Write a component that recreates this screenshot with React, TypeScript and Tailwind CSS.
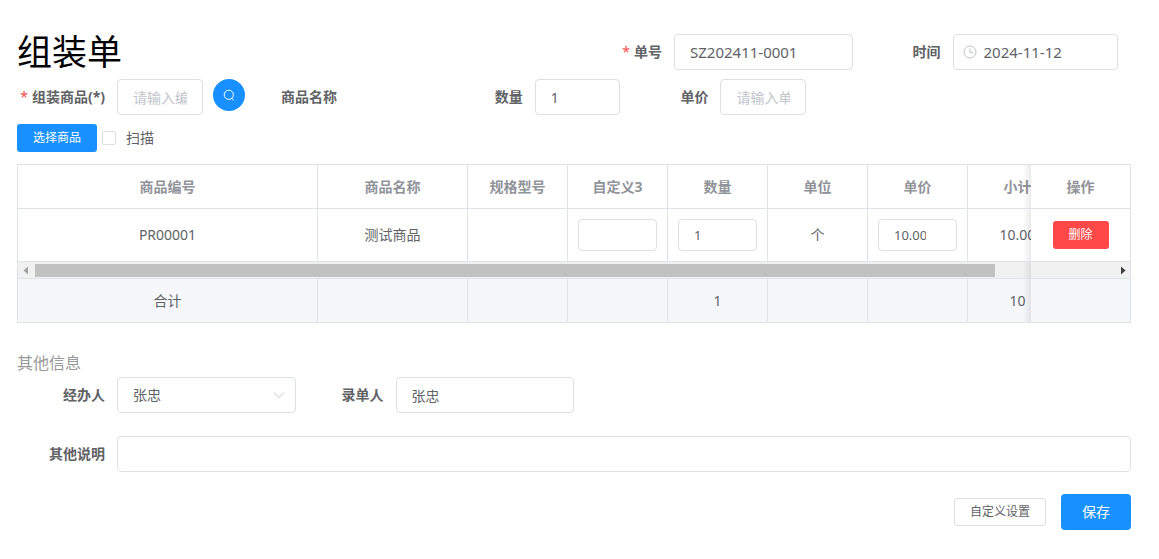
import type { InputHTMLAttributes, ReactNode } from "react";
import clsx from "clsx";

const COLUMNS = [
  { title: "商品编号", width: "w-[300px]", total: "合计" },
  { title: "商品名称", width: "w-[150px]", total: "" },
  { title: "规格型号", width: "w-[100px]", total: "" },
  { title: "自定义3", width: "w-[100px]", total: "" },
  { title: "数量", width: "w-[100px]", total: "1" },
  { title: "单位", width: "w-[100px]", total: "" },
  { title: "单价", width: "w-[100px]", total: "" },
  { title: "小计", width: "w-[100px]", total: "10" },
  { title: "", width: "w-[100px]", total: "" },
];

const table = "w-full min-w-[1250px] table-fixed border-separate border-spacing-0";
const cell = "border-r border-b border-[#dfe2e8] px-2.5 text-center";

// Soft shade that the pinned column casts over what passes below it
const shade =
  "before:absolute before:inset-y-0 before:right-full before:w-2 before:bg-linear-to-l before:from-black/8 before:to-transparent";
const pinned = clsx("sticky right-0", shade);

const inputBase =
  "block w-full min-w-0 rounded border border-[#dcdfe6] bg-white text-[#606266] outline-none placeholder:text-[#c0c4cc] focus:border-[#1890ff]";

function TextInput({ className, ...props }: InputHTMLAttributes<HTMLInputElement>) {
  return <input className={clsx(inputBase, "h-9 px-[15px]", className)} {...props} />;
}

function CellInput(props: InputHTMLAttributes<HTMLInputElement>) {
  return <input className={clsx(inputBase, "h-8 px-[15px] text-[13px]")} {...props} />;
}

function Field({ id, label, required, className, children }: {
  id?: string;
  label: string;
  required?: boolean;
  className?: string;
  children?: ReactNode;
}) {
  return (
    <div className={clsx("flex min-w-0", className)}>
      <label htmlFor={id} className="w-[100px] shrink-0 pr-3 text-right leading-9 font-bold whitespace-nowrap">
        {required && <span className="mr-1 font-normal text-[#ff4949]">*</span>}
        {label}
      </label>
      <div className="relative min-w-0 flex-1">{children}</div>
    </div>
  );
}

function ColGroup() {
  return (
    <colgroup>
      {COLUMNS.map((c) => (
        <col key={c.title} className={c.width} />
      ))}
      <col className="w-[100px]" />
    </colgroup>
  );
}

function ItemsTable() {
  return (
    <div className="mt-3 border-t border-l border-[#dfe2e8]">
      <div className="overflow-hidden">
        <table className={table}>
          <ColGroup />
          <thead className="text-[#909399]">
            <tr className="h-11">
              {COLUMNS.map((c) => (
                <th key={c.title} className={cell}>{c.title}</th>
              ))}
              <th className={clsx(cell, pinned, "bg-white")}>操作</th>
            </tr>
          </thead>
          <tbody>
            <tr className="h-[53px]">
              <td className={cell}>PR00001</td>
              <td className={cell}>测试商品</td>
              <td className={cell} />
              <td className={cell}><CellInput type="text" aria-label="自定义3" /></td>
              <td className={cell}><CellInput type="number" aria-label="数量" defaultValue="1" /></td>
              <td className={cell}>个</td>
              <td className={cell}><CellInput type="number" step="0.01" aria-label="单价" defaultValue="10.00" /></td>
              <td className={cell}>10.00</td>
              <td className={cell} />
              <td className={clsx(cell, pinned, "bg-white")}>
                <button type="button" className="h-7 w-14 rounded-[3px] bg-[#ff4949] text-xs text-white">删除</button>
              </td>
            </tr>
          </tbody>
        </table>
      </div>

      {/* Horizontal scroll bar */}
      <div className="relative flex h-4 items-center bg-[#f1f1f1]">
        <svg className="h-4 w-[17px]" viewBox="0 0 17 16"><path d="M10 4.5v8L5.5 8.5z" fill="#a3a3a3" /></svg>
        <div className="flex-1">
          <div className="h-[13px] w-[89%] bg-[#c1c1c1]" />
        </div>
        <svg className="h-4 w-[17px]" viewBox="0 0 17 16"><path d="M7 4.5v8l4.5-4z" fill="#404040" /></svg>
        <div className={clsx("absolute inset-y-0 right-0 w-[100px] border-r border-[#dfe2e8]", shade)} />
      </div>

      <div className="overflow-hidden">
        <table className={table}>
          <ColGroup />
          <tbody>
            <tr className="h-[45px]">
              {COLUMNS.map((c) => (
                <td key={c.title} className={clsx(cell, "border-t bg-[#f5f7fa]")}>{c.total}</td>
              ))}
              <td className={clsx(cell, pinned, "border-t bg-[#f5f7fa]")} />
            </tr>
          </tbody>
        </table>
      </div>
    </div>
  );
}

export default function App() {
  return (
    <form className="bg-white pt-[34px] pr-7 pb-7 pl-[17px] font-['Noto_Sans','Noto_Sans_CJK_SC',sans-serif] text-sm text-[#606266]">
      <div className="grid grid-cols-24">
        <h1 className="col-span-12 text-[35px] leading-9 text-black">组装单</h1>
        <Field id="orderNo" label="单号" required className="col-span-6">
          <TextInput id="orderNo" type="text" defaultValue="SZ202411-0001" className="text-[15px]" />
        </Field>
        <Field id="orderDate" label="时间" className="col-span-6 pr-[13px]">
          <TextInput id="orderDate" type="text" defaultValue="2024-11-12" className="pl-[30px] text-[15px]" />
          <svg className="absolute top-[11px] left-2.5 size-3.5" viewBox="0 0 14 14" fill="none" stroke="#c0c4cc">
            <circle cx="7" cy="7" r="6" />
            <path d="M7 3.5V7.5H10" />
          </svg>
        </Field>
      </div>

      <div className="mt-[9px] grid grid-cols-24">
        <Field id="product" label="组装商品(*)" required className="col-span-4">
          <TextInput id="product" type="text" placeholder="请输入编号" />
        </Field>
        <div className="pl-2.5">
          <button type="button" aria-label="搜索" className="flex size-8 items-center justify-center rounded-full bg-[#1890ff]">
            <svg className="size-3.5" viewBox="0 0 14 14" fill="none" stroke="#fff">
              <circle cx="6.8" cy="6.8" r="4.6" />
              <path d="M9.4 10.2l2.4 2" />
            </svg>
          </button>
        </div>
        <Field label="商品名称" className="col-span-4" />
        <Field id="qty" label="数量" className="col-span-4">
          <TextInput id="qty" type="text" defaultValue="1" />
        </Field>
        <Field id="price" label="单价" className="col-span-4">
          <TextInput id="price" type="text" placeholder="请输入单价" />
        </Field>
      </div>

      <div className="mt-[9px] flex items-center">
        <button type="button" className="h-7 w-20 rounded-[3px] bg-[#1890ff] text-xs text-white">选择商品</button>
        <label className="ml-[5px] flex items-center gap-2.5">
          <input type="checkbox" className="size-3.5 appearance-none rounded-xs border border-[#dcdfe6] bg-white checked:border-[#1890ff] checked:bg-[#1890ff]" />
          扫描
        </label>
      </div>

      <ItemsTable />

      <h2 className="mt-7 mb-0.5 text-base leading-6 text-[#999999]">其他信息</h2>
      <div className="grid grid-cols-24">
        <Field id="handler" label="经办人" className="col-span-6">
          <select id="handler" className={clsx(inputBase, "h-9 appearance-none px-[15px]")}>
            <option>张忠</option>
          </select>
          <svg className="pointer-events-none absolute top-[11px] right-2.5 size-3.5" viewBox="0 0 14 14" fill="none" stroke="#c0c4cc">
            <path d="M2 4.5l5 5 5-5" />
          </svg>
        </Field>
        <Field id="recorder" label="录单人" className="col-span-6">
          <TextInput id="recorder" type="text" defaultValue="张忠" />
        </Field>
      </div>
      <Field id="remark" label="其他说明" className="mt-[23px]">
        <TextInput id="remark" type="text" />
      </Field>

      <div className="mt-[22px] flex items-center justify-end gap-[15px]">
        <button type="button" className="h-7 w-[92px] rounded-[3px] border border-[#dcdfe6] bg-white text-xs">自定义设置</button>
        <button type="submit" className="h-9 w-[70px] rounded bg-[#1890ff] text-white">保存</button>
      </div>
    </form>
  );
}
